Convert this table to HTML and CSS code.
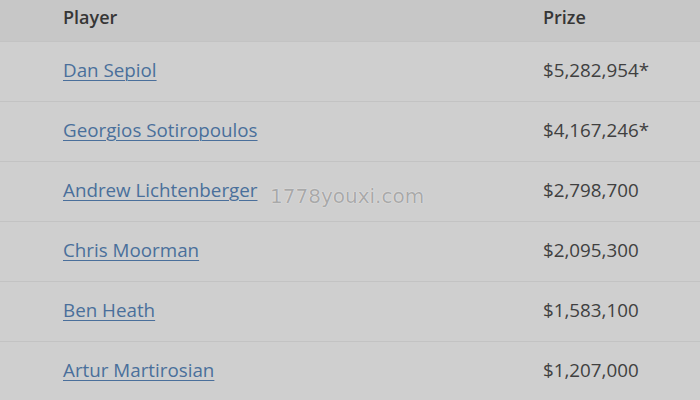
FILE: index.html
```html
<!DOCTYPE html>
<html>
<head>
<meta charset="utf-8">
<link rel="stylesheet" href="styles.css">
</head>
<body>
<div class="table">
  <div class="row head">
    <div class="c1">Player</div>
    <div class="c2">Prize</div>
  </div>
  <div class="row">
    <div class="c1"><a href="#">Dan Sepiol</a></div>
    <div class="c2">$5,282,954*</div>
  </div>
  <div class="row">
    <div class="c1"><a href="#">Georgios Sotiropoulos</a></div>
    <div class="c2">$4,167,246*</div>
  </div>
  <div class="row">
    <div class="c1"><a href="#">Andrew Lichtenberger</a><span class="wm">1778youxi.com</span></div>
    <div class="c2">$2,798,700</div>
  </div>
  <div class="row">
    <div class="c1"><a href="#">Chris Moorman</a></div>
    <div class="c2">$2,095,300</div>
  </div>
  <div class="row">
    <div class="c1"><a href="#">Ben Heath</a></div>
    <div class="c2">$1,583,100</div>
  </div>
  <div class="row">
    <div class="c1"><a href="#">Artur Martirosian</a></div>
    <div class="c2">$1,207,000</div>
  </div>
</div>
</body>
</html>
```

FILE: styles.css
```css
html, body {
  margin: 0;
  padding: 0;
  background: #cfcfcf;
}
body {
  width: 700px;
  height: 400px;
  overflow: hidden;
  font-family: "Open Sans", sans-serif;
  font-size: 18.8px;
  color: #404040;
}
.table {
  display: flex;
  flex-direction: column;
}
.row {
  display: grid;
  grid-template-columns: 543px 1fr;
  align-items: center;
  height: 60px;
  border-top: 1px solid #c3c3c3;
  box-sizing: border-box;
}
.row.head {
  height: 41px;
  border-top: none;
  background: #c7c7c7;
  font-weight: 600;
  font-size: 18px;
  color: #363636;
  padding-bottom: 7px;
}
.c1 {
  padding-left: 63px;
  position: relative;
}
.row:not(.head) .c1, .row:not(.head) .c2 {
  padding-bottom: 3px;
}
a {
  color: #4a6f9b;
  text-decoration: underline;
  text-underline-offset: 3px;
  text-decoration-thickness: 1px;
}
.wm {
  position: absolute;
  left: 270px;
  top: 7px;
  font-family: "DejaVu Sans", sans-serif;
  color: #a9a9a9;
  font-size: 20px;
  text-shadow: 0 0 1px #ececec, 0 0 1px #ececec;
}
```
